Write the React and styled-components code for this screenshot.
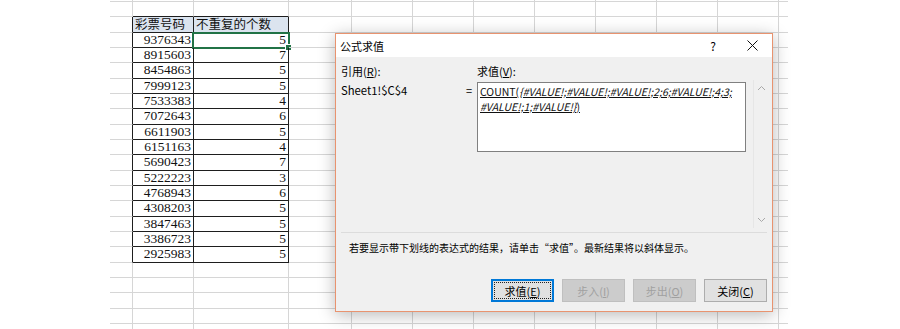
import React from 'react';
import styled, { createGlobalStyle } from 'styled-components';

const GlobalStyle = createGlobalStyle`
  html, body {
    margin: 0;
    padding: 0;
    background: #fff;
  }
  body {
    width: 900px;
    height: 329px;
    overflow: hidden;
    position: relative;
  }
`;

const colWidths = [23, 61, 95, 63, 61, 61, 61, 61, 61, 61, 61, 9];

const codes = [
  ['9376343', 5], ['8915603', 7], ['8454863', 5], ['7999123', 5], ['7533383', 4],
  ['7072643', 6], ['6611903', 5], ['6151163', 4], ['5690423', 7], ['5222223', 3],
  ['4768943', 6], ['4308203', 5], ['3847463', 5], ['3386723', 5], ['2925983', 5],
];

// row 0: sliver at top, row 1: empty, row 2: header, rows 3..17: data, rest empty
const TOTAL_ROWS = 23;
const HEAD = 2;
const LAST = HEAD + codes.length;

const Sheet = styled.div`
  margin-left: 110px;
  display: grid;
  grid-template-columns: ${colWidths.map((w) => w + 'px').join(' ')};
  grid-template-rows: 2px;
  grid-auto-rows: 15.33px;
`;

const Cell = styled.div`
  position: relative;
  box-sizing: border-box;
  border-right: ${(p) => (p.$noRight ? 'none' : `1px solid ${p.$dr ? '#1e1e1e' : '#d6d6d6'}`)};
  border-bottom: 1px solid ${(p) => (p.$db ? '#1e1e1e' : '#d6d6d6')};
  background: ${(p) => (p.$head ? '#dbe4ef' : 'transparent')};
  display: flex;
  align-items: center;
  justify-content: ${(p) => (p.$head ? 'flex-start' : 'flex-end')};
  padding: 0 2px;
  overflow: visible;
  white-space: nowrap;
  font-family: ${(p) => (p.$head ? '"Noto Sans CJK SC", sans-serif' : '"Liberation Serif", serif')};
  font-size: ${(p) => (p.$head ? '12.5px' : '13.5px')};
  line-height: 14px;
  color: #111;
`;

const Selection = styled.div`
  position: absolute;
  left: -2px;
  top: -1px;
  right: -1px;
  bottom: -1px;
  border: 2px solid #217346;
  pointer-events: none;
`;

const Handle = styled.div`
  position: absolute;
  right: -4px;
  bottom: -4px;
  width: 5px;
  height: 5px;
  background: #217346;
  border: 1px solid #fff;
`;

const SelectedWrap = styled.div`
  position: relative;
  overflow: visible;
`;

const Dialog = styled.div`
  position: absolute;
  left: 335px;
  top: 33px;
  width: 438px;
  height: 279px;
  box-sizing: border-box;
  border: 1px solid #e8936f;
  background: #f0f0f0;
  box-shadow: 0 3px 16px rgba(0, 0, 0, 0.28);
  display: flex;
  flex-direction: column;
  font-family: "Noto Sans CJK SC", sans-serif;
  font-size: 11px;
  color: #000;
`;

const TitleBar = styled.div`
  height: 23px;
  background: #fff;
  display: flex;
  align-items: center;
  padding-left: 4px;
`;

const Title = styled.div`
  flex: 1;
  font-size: 11px;
`;

const TitleButton = styled.div`
  width: ${(p) => p.$w}px;
  height: 23px;
  display: flex;
  align-items: center;
  justify-content: center;
  font-size: 12px;
`;

const Body = styled.div`
  flex: 1;
  display: flex;
  flex-direction: column;
  padding: 0 5px 9px 5px;
`;

const EvalGrid = styled.div`
  display: grid;
  grid-template-columns: 125px 11px 269px 7px 15px;
  grid-template-rows: 25px 150px;
`;

const Label = styled.div`
  padding-top: 7px;
  line-height: 15px;
`;

const Ref = styled.div`
  line-height: 16px;
  font-size: 11.3px;
`;

const Equals = styled.div`
  line-height: 16px;
`;

const FormulaBox = styled.div`
  height: 70px;
  box-sizing: border-box;
  background: #fff;
  border: 1px solid #808080;
  padding: 1px 2px;
  line-height: 15px;
  font-size: 10.5px;
  text-decoration: underline;
  white-space: nowrap;
  color: #111;
`;

const Scroll = styled.div`
  grid-column: 5;
  grid-row: 1 / 3;
  margin-top: 23px;
  height: 148px;
  display: flex;
  flex-direction: column;
  justify-content: space-between;
  align-items: center;
  padding: 5px 0;
  box-sizing: border-box;
  border-left: 1px solid #e6e6e6;
`;

const Separator = styled.div`
  height: 1px;
  background: #dcdcdc;
`;

const Hint = styled.div`
  height: 30px;
  line-height: 30px;
  padding-left: 8px;
  font-size: 10px;
`;

const ButtonRow = styled.div`
  margin-top: 16px;
  display: flex;
  justify-content: flex-end;
  gap: 8px;
`;

const Button = styled.div`
  position: relative;
  width: 63px;
  height: 23px;
  box-sizing: border-box;
  display: flex;
  align-items: center;
  justify-content: center;
  font-size: 11px;
  background: ${(p) => (p.$disabled ? '#cccccc' : '#e1e1e1')};
  color: ${(p) => (p.$disabled ? '#a0a0a0' : '#000')};
  border: ${(p) => (p.$primary ? '2px solid #0078d7' : `1px solid ${p.$disabled ? '#bfbfbf' : '#adadad'}`)};

  ${(p) =>
    p.$primary &&
    `
    &::after {
      content: '';
      position: absolute;
      inset: 1px;
      border: 1px dotted #222;
    }
  `}
`;

const U = styled.span`
  text-decoration: underline;
`;

const Chevron = ({ up }) => (
  <svg width="9" height="6" viewBox="0 0 9 6">
    <polyline
      points={up ? '1,5 4.5,1.5 8,5' : '1,1 4.5,4.5 8,1'}
      fill="none"
      stroke="#a8a8a8"
      strokeWidth="1"
    />
  </svg>
);

const CloseIcon = () => (
  <svg width="11" height="11" viewBox="0 0 11 11">
    <path d="M0.5 0.5 L10.5 10.5 M10.5 0.5 L0.5 10.5" stroke="#111" strokeWidth="1" />
  </svg>
);

const renderCell = (r, c) => {
  const inTable = r >= HEAD && r <= LAST;
  const dr = inTable && c <= 2;
  const db = (c === 1 || c === 2) && r >= HEAD - 1 && r <= LAST;
  const key = `${r}-${c}`;
  let content = null;
  if (r === HEAD && c === 1) content = '彩票号码';
  if (r === HEAD && c === 2) content = '不重复的个数';
  if (r > HEAD && r <= LAST && (c === 1 || c === 2)) content = codes[r - HEAD - 1][c - 1];
  const selected = r === HEAD + 1 && c === 2;
  const cell = (
    <Cell
      key={key}
      $dr={dr}
      $db={db}
      $head={r === HEAD && (c === 1 || c === 2)}
      $noRight={c === colWidths.length - 1}
    >
      {content}
    </Cell>
  );
  if (!selected) return cell;
  return (
    <SelectedWrap key={key}>
      <Cell $dr={dr} $db={db} style={{ height: '100%' }}>
        {content}
      </Cell>
      <Selection>
        <Handle />
      </Selection>
    </SelectedWrap>
  );
};

export default function App() {
  const rows = [];
  for (let r = 0; r < TOTAL_ROWS; r++) {
    for (let c = 0; c < colWidths.length; c++) rows.push(renderCell(r, c));
  }

  return (
    <>
      <GlobalStyle />
      <Sheet>{rows}</Sheet>

      <Dialog>
        <TitleBar>
          <Title>公式求值</Title>
          <TitleButton $w={38}>?</TitleButton>
          <TitleButton $w={40}>
            <CloseIcon />
          </TitleButton>
        </TitleBar>
        <Body>
          <EvalGrid>
            <Label>
              引用(<U>R</U>):
            </Label>
            <div />
            <Label>
              求值(<U>V</U>):
            </Label>
            <div />
            <Ref>Sheet1!$C$4</Ref>
            <Equals>=</Equals>
            <FormulaBox>
              COUNT(<em>{'{#VALUE!;#VALUE!;#VALUE!;2;6;#VALUE!;4;3;'}</em>
              <br />
              <em>{'#VALUE!;1;#VALUE!}'}</em>)
            </FormulaBox>
            <Scroll>
              <Chevron up />
              <Chevron />
            </Scroll>
          </EvalGrid>
          <Separator />
          <Hint>若要显示带下划线的表达式的结果，请单击“求值”。最新结果将以斜体显示。</Hint>
          <ButtonRow>
            <Button $primary>
              求值(<U>E</U>)
            </Button>
            <Button $disabled>
              步入(<U>I</U>)
            </Button>
            <Button $disabled>
              步出(<U>O</U>)
            </Button>
            <Button>
              关闭(<U>C</U>)
            </Button>
          </ButtonRow>
        </Body>
      </Dialog>
    </>
  );
}
